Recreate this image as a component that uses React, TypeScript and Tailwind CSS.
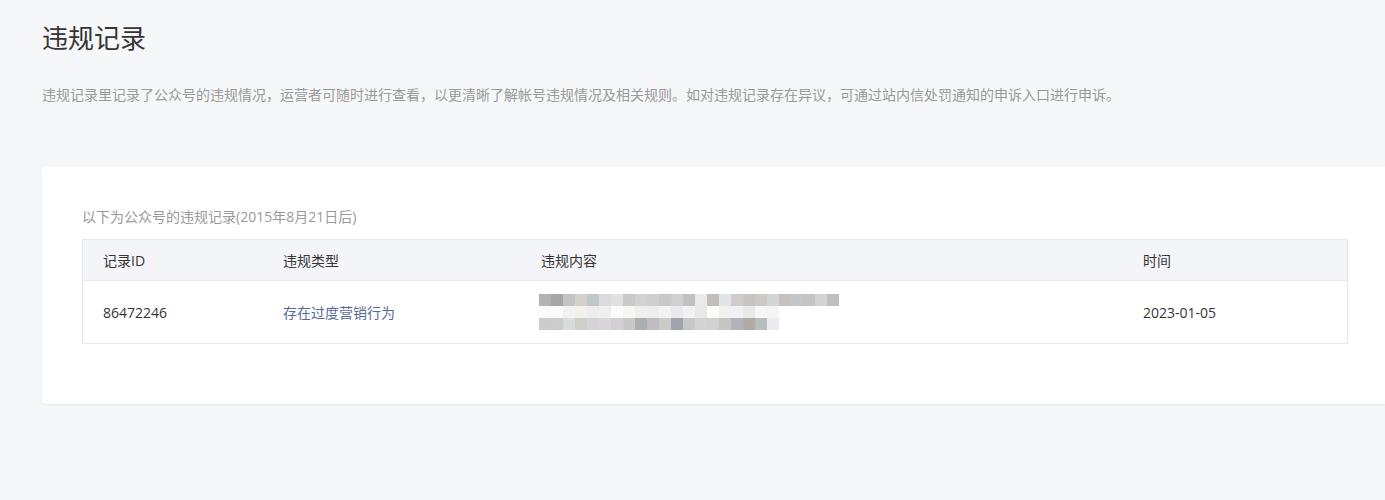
// Violation records page
const row1 = [
  'bg-[#b5b1ae]', 'bg-[#a5a7a6]', 'bg-[#c3c3c3]', 'bg-[#d4cfcb]', 'bg-[#c0c9ca]',
  'bg-[#dcdadd]', 'bg-[#e0e0e3]', 'bg-[#cbcac8]', 'bg-[#d2d2d2]', 'bg-[#d0cecf]',
  'bg-[#c9c9cc]', 'bg-[#d0cfd1]', 'bg-[#c3c1bf]', 'bg-[#e9ebea]', 'bg-[#c2bfba]',
  'bg-[#e1e5ea]', 'bg-[#cfcdcc]', 'bg-[#c7c4c2]', 'bg-[#cbcac8]', 'bg-[#d3d5d4]',
  'bg-[#c6c1bf]', 'bg-[#c3c6ca]', 'bg-[#c7c3c4]', 'bg-[#d3d3d6]', 'bg-[#c0bebf]',
];
const row2 = [
  'bg-[#fafafa]', 'bg-[#fbfbfb]', 'bg-[#f1f2f1]', 'bg-[#f3f1ef]', 'bg-[#eeedee]',
  'bg-[#efefef]', 'bg-[#fafcfb]', 'bg-[#f5f5f4]', 'bg-[#efeff0]', 'bg-[#eeeeee]',
  'bg-[#f3f3f1]', 'bg-[#e9eaee]', 'bg-[#f2f2f0]', 'bg-[#e8e8e8]', 'bg-[#fbfbf9]',
  'bg-[#f3f1ef]', 'bg-[#f1f1f3]', 'bg-[#e9e9ea]', 'bg-[#f6f6f6]', 'bg-[#f4f4f4]',
];
const row3 = [
  'bg-[#cbcbcb]', 'bg-[#cccccc]', 'bg-[#d8dcdd]', 'bg-[#cfcfca]', 'bg-[#d5d2d8]',
  'bg-[#d8d5dc]', 'bg-[#d2d0d3]', 'bg-[#c8c8c6]', 'bg-[#adaeb0]', 'bg-[#c0bcc0]',
  'bg-[#cacbc6]', 'bg-[#a1a4ac]', 'bg-[#c8c7c5]', 'bg-[#d3d3d3]', 'bg-[#d2d0d2]',
  'bg-[#c6c5c3]', 'bg-[#b3b3bb]', 'bg-[#b0aba7]', 'bg-[#b8bec0]', 'bg-[#eceaef]',
];

function Mosaic() {
  return (
    <div className="flex flex-col -ml-[2px]">
      {[row1, row2, row3].map((row, i) => (
        <div key={i} className="flex h-[12px]">
          {row.map((c, j) => (
            <div key={j} className={`w-[12px] h-full ${c}`} />
          ))}
        </div>
      ))}
    </div>
  );
}

export default function App() {
  return (
    <div
      className="w-[1385px] h-[500px] overflow-hidden bg-[#f6f7f9] text-[#353535]"
      style={{ fontFamily: '"Open Sans", "Noto Sans CJK SC", sans-serif' }}
    >
      <div className="pl-[42px] pt-[18px]">
        {/* Header */}
        <h1 className="text-[26px] leading-[40px] font-normal">违规记录</h1>
        <p className="mt-[26px] text-[14px] leading-[22px] text-[#9a9a9a]">
          违规记录里记录了公众号的违规情况，运营者可随时进行查看，以更清晰了解帐号违规情况及相关规则。如对违规记录存在异议，可通过站内信处罚通知的申诉入口进行申诉。
        </p>

        {/* Card */}
        <div className="mt-[61px] w-[1346px] bg-white rounded-[4px] shadow-[0_1px_2px_rgba(150,150,150,0.15)] px-[40px] pt-[39px] pb-[60px]">
          <p className="text-[14px] leading-[22px] text-[#9a9a9a] mb-[11px]">
            以下为公众号的违规记录(2015年8月21日后)
          </p>
          <div className="border border-[#e7e7eb] text-[14px]">
            <div className="flex h-[41px] items-center bg-[#f4f5f9] border-b border-[#e7e7eb]">
              <div className="w-[180px] pl-[20px]">记录ID</div>
              <div className="w-[258px] pl-[20px]">违规类型</div>
              <div className="w-[602px] pl-[20px]">违规内容</div>
              <div className="flex-1 pl-[20px]">时间</div>
            </div>
            <div className="flex h-[62px] items-center">
              <div className="w-[180px] pl-[20px]">86472246</div>
              <div className="w-[258px] pl-[20px] text-[#576b95]">存在过度营销行为</div>
              <div className="w-[602px] pl-[20px]">
                <Mosaic />
              </div>
              <div className="flex-1 pl-[20px]">2023-01-05</div>
            </div>
          </div>
        </div>
      </div>
    </div>
  );
}
